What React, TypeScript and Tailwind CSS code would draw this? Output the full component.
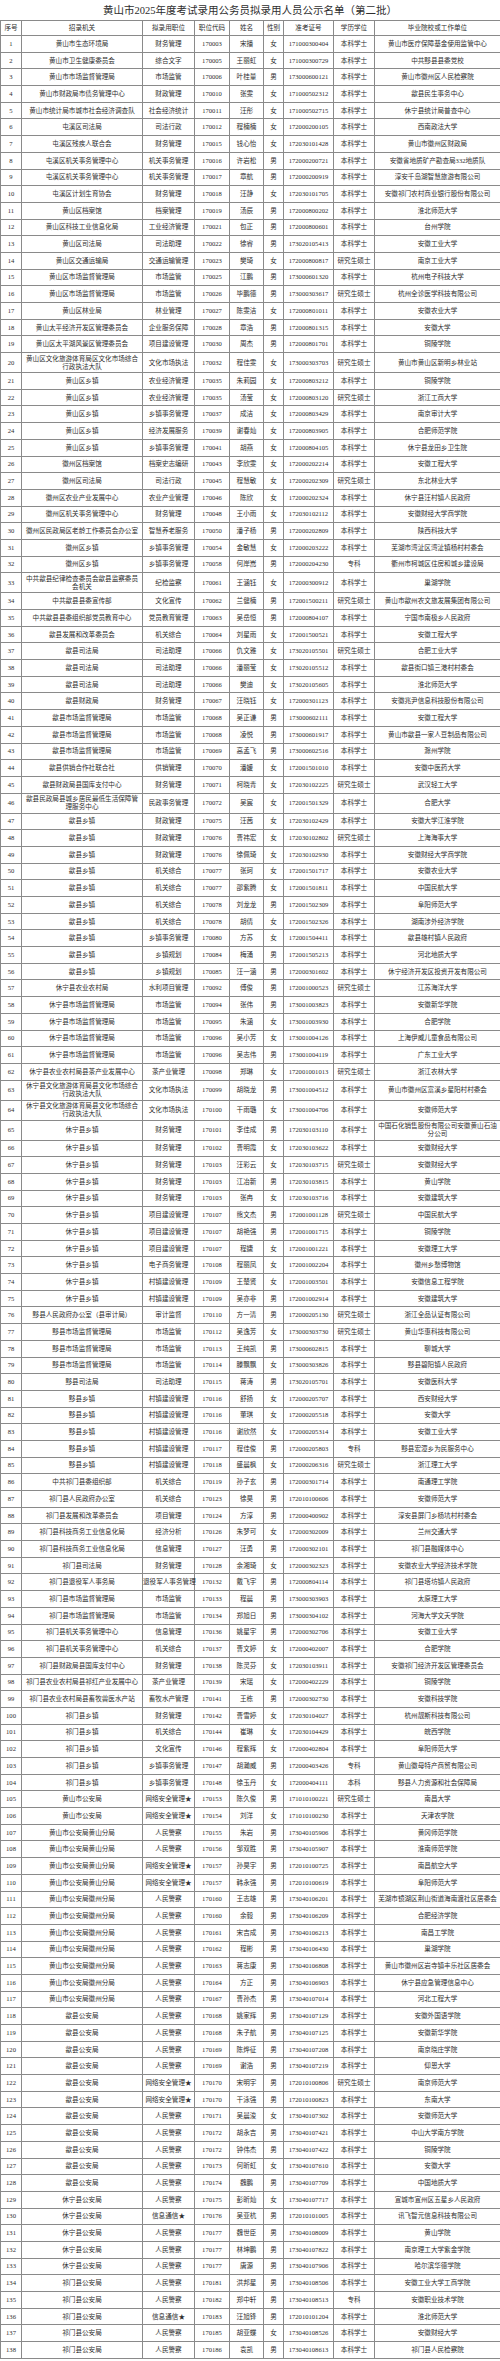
const TITLE = '黄山市2025年度考试录用公务员拟录用人员公示名单（第二批）';

const HEADERS = ['序号', '招录机关', '拟录用职位', '职位代码', '姓名', '性别', '准考证号', '学历学位', '毕业院校或工作单位'];
const COL_W = ['w-[21px]', 'w-[121px]', 'w-[52px]', 'w-[35px]', 'w-[34px]', 'w-[20px]', 'w-[50px]', 'w-[41px]', 'w-[126px]'];

// rows whose text wraps onto two lines
const TALL = new Set([20, 33, 46, 63, 64, 65]);

const ROWS = `黄山市生态环境局|财务管理|170003|宋播|女|171000300404|本科学士|黄山市医疗保障基金使用监管中心
黄山市卫生健康委员会|综合文字|170005|王丽虹|女|171000300729|本科学士|中共黟县县委党校
黄山市市场监督管理局|市场监管|170006|叶桂量|男|173000600121|本科学士|黄山市徽州区人民检察院
黄山市财政局市债务管理中心|财政管理|170010|张雯|女|171000502312|本科学士|歙县民生事务中心
黄山市统计局市城市社会经济调查队|社会经济统计|170011|汪彤|女|171000502715|本科学士|休宁县统计局普查中心
屯溪区司法局|司法行政|170012|程楠楠|女|172000200105|本科学士|西南政法大学
屯溪区残疾人联合会|财务管理|170015|钱心怡|女|172030101428|本科学士|黄山市徽州区财政局
屯溪区机关事务管理中心|机关事务管理|170016|许岩松|男|172000200721|本科学士|安徽省地质矿产勘查局332地质队
屯溪区机关事务管理中心|机关事务管理|170017|章航|男|172000200919|本科学士|淳安千岛湖智慧旅游有限公司
屯溪区计划生育协会|财务管理|170018|汪静|女|172030101705|本科学士|安徽祁门农村商业银行股份有限公司
黄山区档案馆|档案管理|170019|汤辰|男|172000800202|本科学士|淮北师范大学
黄山区科技工业信息化局|工业经济管理|170021|包正|男|172000800601|本科学士|台州学院
黄山区司法局|司法助理|170022|徐睿|男|173020105413|本科学士|安徽工业大学
黄山区交通运输局|交通运输管理|170023|樊琦|女|172000800817|研究生硕士|南京工业大学
黄山区市场监督管理局|市场监管|170025|江鹏|男|173000601320|本科学士|杭州电子科技大学
黄山区市场监督管理局|市场监管|170026|毕鹏德|男|173000303617|研究生硕士|杭州全诊医学科技有限公司
黄山区林业局|林业管理|170027|陈雯洁|女|172000801011|本科学士|安徽农业大学
黄山太平经济开发区管理委员会|企业服务保障|170028|章浩|男|172000801315|本科学士|安徽大学
黄山区太平湖风景区管理委员会|项目建设管理|170030|周杰|男|172000801701|本科学士|铜陵学院
黄山区文化旅游体育局区文化市场综合行政执法大队|文化市场执法|170032|程佳雯|女|173000303703|研究生硕士|黄山市黄山区新明乡林业站
黄山区乡镇|农业经济管理|170035|朱莉园|女|172000803212|本科学士|铜陵学院
黄山区乡镇|农业经济管理|170035|汤莹|女|172000803120|研究生硕士|浙江工商大学
黄山区乡镇|乡镇事务管理|170037|成洁|女|172000803429|本科学士|南京审计大学
黄山区乡镇|经济发展服务|170039|谢春灿|女|172000803905|本科学士|合肥师范学院
黄山区乡镇|乡镇事务管理|170041|胡燕|女|172000804105|本科学士|休宁县龙田乡卫生院
徽州区档案馆|档案史志编研|170043|李欣雯|女|172000202214|本科学士|安徽工程大学
徽州区司法局|司法行政|170045|程慧敏|女|172000202309|研究生硕士|东北林业大学
徽州区农业产业发展中心|农业产业管理|170046|陈欣|女|172000202324|本科学士|休宁县汪村镇人民政府
徽州区机关事务管理中心|财务管理|170048|王小雨|女|172030102112|本科学士|安徽财经大学商学院
徽州区民政局区老龄工作委员会办公室|智慧养老服务|170050|潘子杨|男|172000202809|本科学士|陕西科技大学
徽州区乡镇|乡镇事务管理|170054|金敏慧|女|172000203222|本科学士|芜湖市湾沚区湾沚镇杨村村委会
徽州区乡镇|乡镇事务管理|170058|何岸嵩|男|172000204230|专科|衢州市柯城区住房和城乡建设局
中共歙县纪律检查委员会歙县监察委员会机关|纪检监察|170061|王涵钰|女|172000300912|本科学士|巢湖学院
中共歙县县委宣传部|文化宣传|170062|兰健楠|男|172001500211|研究生硕士|黄山市歙州农文旅发展集团有限公司
中共歙县县委组织部党员教育中心|党员教育管理|170063|吴岳恒|男|172000804107|本科学士|宁国市南极乡人民政府
歙县发展和改革委员会|机关综合|170064|刘星雨|女|172001500521|本科学士|安徽工程大学
歙县司法局|司法助理|170066|仇文雅|女|173020105501|研究生硕士|合肥工业大学
歙县司法局|司法助理|170066|潘丽莹|女|173020105512|本科学士|歙县街口镇三港村村委会
歙县司法局|司法助理|170066|樊迪|女|173020105605|本科学士|淮北师范大学
歙县财政局|财务管理|170067|汪晓钰|女|172000301123|本科学士|安徽兆尹信息科技股份有限公司
歙县市场监督管理局|市场监管|170068|吴正谦|男|173000602111|本科学士|安徽工程大学
歙县市场监督管理局|市场监管|170068|凌悦|男|173000601917|本科学士|黄山市歙县一家人豆制品有限公司
歙县市场监督管理局|市场监管|170069|高孟飞|男|173000602516|本科学士|滁州学院
歙县供销合作社联合社|供销管理|170070|潘媛|女|172001501010|本科学士|安徽中医药大学
歙县财政局县国库支付中心|财务管理|170071|柯晓青|女|172030102225|研究生硕士|武汉轻工大学
歙县民政局县城乡居民最低生活保障管理服务中心|民政事务管理|170072|吴宸|女|172001501329|本科学士|合肥大学
歙县乡镇|财政管理|170075|汪茜|女|172030102429|本科学士|安徽大学江淮学院
歙县乡镇|财政管理|170076|曹祎宏|女|172030102802|研究生硕士|上海海事大学
歙县乡镇|财政管理|170076|徐佩琦|女|172030102930|本科学士|安徽财经大学商学院
歙县乡镇|机关综合|170077|张珂|女|172001501717|本科学士|安徽农业大学
歙县乡镇|机关综合|170077|邵紫腾|女|172001501811|本科学士|中国民航大学
歙县乡镇|机关综合|170078|刘龙龙|男|172001502309|本科学士|阜阳师范大学
歙县乡镇|机关综合|170078|胡倩|女|172001502326|本科学士|湖南涉外经济学院
歙县乡镇|乡镇事务管理|170080|方苏|女|172001504411|本科学士|歙县雄村镇人民政府
歙县乡镇|乡镇规划|170084|梅涌|男|172001505213|本科学士|河北地质大学
歙县乡镇|乡镇规划|170085|汪一涵|男|172000301602|本科学士|休宁经济开发区投资开发有限公司
休宁县农业农村局|水利项目管理|170092|傅俊|男|172001000523|研究生硕士|江苏海洋大学
休宁县市场监督管理局|市场监管|170094|张伟|男|173001003823|本科学士|安徽新华学院
休宁县市场监督管理局|市场监管|170095|朱涵|女|173001003930|本科学士|合肥学院
休宁县市场监督管理局|市场监管|170096|吴小芳|女|173001004126|本科学士|上海伊威儿童食品有限公司
休宁县市场监督管理局|市场监管|170096|吴志伟|男|173001004119|本科学士|广东工业大学
休宁县农业农村局县茶产业发展中心|茶产业管理|170098|郑琳|女|172001001013|研究生硕士|浙江农林大学
休宁县文化旅游体育局县文化市场综合行政执法大队|文化市场执法|170099|胡晓龙|男|173001004512|本科学士|黄山市徽州区富溪乡星阳村村委会
休宁县文化旅游体育局县文化市场综合行政执法大队|文化市场执法|170100|干雨璐|女|173001004706|本科学士|安徽师范大学
休宁县乡镇|财务管理|170101|李佳成|男|172030103110|本科学士|中国石化销售股份有限公司安徽黄山石油分公司
休宁县乡镇|财务管理|170102|曹明霞|女|172030103622|本科学士|安徽财经大学
休宁县乡镇|财务管理|170103|汪彩云|女|172030103715|研究生硕士|安徽财经大学
休宁县乡镇|财务管理|170103|江冶新|男|172030103815|本科学士|黄山学院
休宁县乡镇|财务管理|170103|张冉|女|172030103716|本科学士|安徽建筑大学
休宁县乡镇|项目建设管理|170107|熊文杰|男|172001001128|研究生硕士|中国民航大学
休宁县乡镇|项目建设管理|170107|胡艳强|男|172001001715|本科学士|铜陵学院
休宁县乡镇|项目建设管理|170107|程婕|女|172001001221|本科学士|安徽理工大学
休宁县乡镇|电子商务管理|170108|程丽凤|女|172001002204|本科学士|徽州乡愁博物馆
休宁县乡镇|村镇建设管理|170109|王楚贤|女|172001003501|本科学士|安徽信息工程学院
休宁县乡镇|村镇建设管理|170109|吴亦非|男|172001002914|本科学士|安徽建筑大学
黟县人民政府办公室（县审计局）|审计监督|170110|方一清|男|172000205130|研究生硕士|浙江全品认证有限公司
黟县市场监督管理局|市场监管|170112|吴逸芳|女|173000303730|研究生硕士|黄山华惠科技有限公司
黟县市场监督管理局|市场监管|170113|王纯凯|男|173000602815|本科学士|聊城大学
黟县市场监督管理局|市场监管|170114|滕飘飘|女|173000303826|本科学士|黟县碧阳镇人民政府
黟县司法局|司法助理|170115|蒋涛|男|173020105701|本科学士|安徽医科大学
黟县乡镇|村镇建设管理|170116|舒扬|女|172000205707|本科学士|西安财经大学
黟县乡镇|村镇建设管理|170116|董琪|女|172000205518|本科学士|安徽大学
黟县乡镇|村镇建设管理|170116|谢欣然|女|172000205314|本科学士|安徽工业大学
黟县乡镇|村镇建设管理|170117|程佳俊|男|172000205803|专科|黟县宏潭乡为民服务中心
黟县乡镇|村镇建设管理|170118|盛晨枫|女|172000206316|研究生硕士|浙江理工大学
中共祁门县委组织部|机关综合|170119|孙子玄|男|172000301714|本科学士|南通理工学院
祁门县人民政府办公室|机关综合|170123|徐昊|男|172010100606|本科学士|安徽师范大学
祁门县发展和改革委员会|项目管理|170124|方淳|男|172000400902|本科学士|淳安县屏门乡杨坑村村委会
祁门县科技商务工业信息化局|经济分析|170126|朱梦可|女|172000302009|本科学士|兰州交通大学
祁门县科技商务工业信息化局|信息管理|170127|汪勇|男|172000302101|本科学士|祁门县融媒体中心
祁门县司法局|财务管理|170128|余湘琦|女|172000302323|本科学士|安徽农业大学经济技术学院
祁门县退役军人事务局|退役军人事务管理|170132|戴飞宇|男|172000804114|本科学士|祁门县塔坊镇人民政府
祁门县市场监督管理局|市场监管|170133|程晨|男|173000303903|本科学士|太原理工大学
祁门县市场监督管理局|市场监管|170134|郑旭日|男|173000304102|本科学士|河海大学文天学院
祁门县机关事务管理中心|信息管理|170136|姚星宇|男|172000302706|本科学士|安徽工业大学
祁门县机关事务管理中心|机关综合|170137|曹文婷|女|172000402007|本科学士|合肥学院
祁门县财政局县国库支付中心|财务管理|170138|陈灵芬|女|172030103911|本科学士|安徽祁门经济开发区管理委员会
祁门县农业农村局县祁红产业发展中心|茶产业管理|170139|宋瑶|女|172000402229|本科学士|铜陵学院
祁门县农业农村局县畜牧兽医水产站|畜牧水产管理|170141|王栋|男|172000302730|本科学士|安徽科技学院
祁门县乡镇|财务管理|170142|曹雪婷|女|172030104027|本科学士|杭州靓斯科技有限公司
祁门县乡镇|机关综合|170144|崔琳|女|172030104429|本科学士|皖西学院
祁门县乡镇|文化宣传|170146|程紫辉|女|172000402804|本科学士|阜阳师范大学
祁门县乡镇|乡镇事务管理|170147|胡瀚威|男|172000403426|专科|黄山徽母特产商贸有限公司
祁门县乡镇|乡镇事务管理|170148|徐玉丹|女|172000404111|本科|黟县人力资源和社会保障局
黄山市公安局|网络安全管理★|170153|陈久俊|男|171010100221|研究生硕士|南昌大学
黄山市公安局|网络安全管理★|170154|刘洋|女|171010100230|本科学士|天津农学院
黄山市公安局黄山分局|人民警察|170155|朱岩|男|173040105906|本科学士|黄冈师范学院
黄山市公安局黄山分局|人民警察|170156|邹双胜|男|173040105907|本科学士|淮南师范学院
黄山市公安局黄山分局|网络安全管理★|170157|孙昊宇|男|172010100725|本科学士|南昌航空大学
黄山市公安局黄山分局|网络安全管理★|170157|韩永强|男|172010100619|本科学士|阜阳师范大学
黄山市公安局徽州分局|人民警察|170160|王志雄|男|173040106201|本科学士|芜湖市镜湖区荆山街道海南渡社区居委会
黄山市公安局徽州分局|人民警察|170160|余毅|男|173040106209|本科学士|合肥经济学院
黄山市公安局徽州分局|人民警察|170161|宋吉成|男|173040106213|本科学士|南昌工学院
黄山市公安局徽州分局|人民警察|170162|程彬|男|173040106430|本科学士|巢湖学院
黄山市公安局徽州分局|人民警察|170163|蒋志康|男|173040106808|本科学士|黄山市徽州区岩寺镇丰乐社区居委会
黄山市公安局徽州分局|人民警察|170164|方正|男|173040106903|本科学士|休宁县应急管理信息中心
黄山市公安局徽州分局|人民警察|170167|曹孙杰|男|173040107014|本科学士|河北工程大学
歙县公安局|人民警察|170168|姚家辉|男|173040107129|本科学士|安徽外国语学院
歙县公安局|人民警察|170168|朱子航|男|173040107125|本科学士|安徽新华学院
歙县公安局|人民警察|170169|陈烨征|男|173040107208|本科学士|南京晓庄学院
歙县公安局|人民警察|170169|谢浩|男|173040107219|本科学士|仰恩大学
歙县公安局|网络安全管理★|170170|宋明宇|男|172010100806|研究生硕士|南京师范大学
歙县公安局|网络安全管理★|170170|干泳强|男|172010100823|本科学士|东南大学
歙县公安局|人民警察|170171|吴晨浚|女|173040107302|本科学士|安徽师范大学
歙县公安局|人民警察|170172|胡永吉|男|173040107421|本科学士|中山大学南方学院
歙县公安局|人民警察|170172|钟伟杰|男|173040107422|本科学士|铜陵学院
歙县公安局|人民警察|170173|何昕虹|女|173040107610|本科学士|安徽大学
歙县公安局|人民警察|170174|魏鹏|男|173040107709|本科学士|中国地质大学
休宁县公安局|人民警察|170175|彭昕灿|女|173040107717|本科学士|宣城市宣州区五星乡人民政府
休宁县公安局|信息通信★|170176|吴亚杭|男|172010101005|本科学士|讯飞智元信息科技有限公司
休宁县公安局|人民警察|170177|魏世臣|男|173040108009|本科学士|黄山学院
休宁县公安局|人民警察|170177|林坤鹏|男|173040107822|本科学士|南京理工大学紫金学院
休宁县公安局|人民警察|170177|唐源|男|173040107906|本科学士|哈尔滨华德学院
祁门县公安局|人民警察|170181|洪邦星|男|173040108506|本科学士|安徽工业大学工商学院
祁门县公安局|人民警察|170182|郑中轩|男|173040108513|专科|安徽职业技术学院
祁门县公安局|信息通信★|170183|汪旭锋|男|172010101204|本科学士|淮北师范大学
祁门县公安局|人民警察|170185|胡亚蝶|女|173040108526|本科学士|安徽财经大学
祁门县公安局|人民警察|170186|袁凯|男|173040108613|本科学士|祁门县人民检察院`
  .split('\n')
  .map((line) => line.split('|'));

const CELL = 'border border-[#8a8a8a] text-center align-middle leading-[8px]';
// the two long text columns may wrap, the rest stay on one line
const CELL_PAD = ['px-0 whitespace-nowrap', 'px-[3px]', 'px-0 whitespace-nowrap', 'px-0 whitespace-nowrap', 'px-0 whitespace-nowrap', 'px-0 whitespace-nowrap', 'px-0 whitespace-nowrap', 'px-0 whitespace-nowrap', 'px-[2px]'];

export default function App() {
  return (
    <div className="w-[500px] bg-white text-[#2e2e2e] font-['Liberation_Serif','Noto_Sans_CJK_SC',serif]">
      <div className="h-[20px] flex items-center justify-center text-[10.5px] leading-none pt-[2px]">{TITLE}</div>
      <table className="w-[500px] table-fixed border-collapse text-[6.6px]">
        <colgroup>
          {COL_W.map((w, i) => (
            <col key={i} className={w} />
          ))}
        </colgroup>
        <thead>
          <tr className="h-[15px]">
            {HEADERS.map((h) => (
              <th key={h} className={`${CELL} px-0 font-normal whitespace-nowrap`}>{h}</th>
            ))}
          </tr>
        </thead>
        <tbody>
          {ROWS.map((cells, i) => (
            <tr key={i} className={TALL.has(i + 1) ? 'h-[20px]' : 'h-[16.7px]'}>
              <td className={`${CELL} ${CELL_PAD[0]}`}>{i + 1}</td>
              {cells.map((c, j) => (
                <td key={j} className={`${CELL} ${CELL_PAD[j + 1]}`}>{c}</td>
              ))}
            </tr>
          ))}
        </tbody>
      </table>
    </div>
  );
}
